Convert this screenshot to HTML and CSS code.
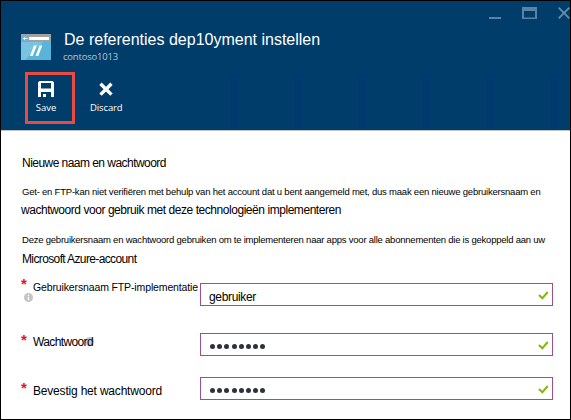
FILE: index.html
```html
<!DOCTYPE html>
<html lang="nl">
<head>
<meta charset="utf-8">
<title>De referenties instellen</title>
<link rel="stylesheet" href="styles.css">
</head>
<body>
<div class="blade">
  <header class="header">
    <div class="window-buttons">
      <svg width="12" height="12" viewBox="0 0 12 12"><path d="M0 10h12v2H0z" fill="#5a82a3"/></svg>
      <svg width="15" height="12" viewBox="0 0 15 12"><path fill-rule="evenodd" d="M0 0h15v12H0zM2 4v6.500h11V4z" fill="#5a82a3"/></svg>
      <svg width="12" height="12" viewBox="0 0 12 12"><path d="M.7.7l10.600 10.600M11.300.7L.7 11.300" stroke="#6a8eac" stroke-width="1.700"/></svg>
    </div>
    <div class="heading">
      <svg class="site-icon" width="30" height="26" viewBox="0 0 30 26">
        <path d="M0 0h30v26H0z" fill="#59b4d9"/>
        <path d="M0 8h22L4 26H0z" fill="#7ac3e1"/>
        <path d="M0 0h30v8H0z" fill="#a0a1a2"/>
        <path d="M8 3h20v3H8z" fill="#fff"/>
        <circle cx="4.300" cy="4.500" r="3.100" fill="#59b4d9"/>
        <path d="M6.700 4.500H2.400M4.300 2.700L2.400 4.500l1.900 1.800" fill="none" stroke="#fff" stroke-width=".9"/>
        <path d="M13 11.500h2.800L11.800 22H9zM18.500 11.500h2.800L17.300 22h-2.800z" fill="#fff"/>
      </svg>
      <div>
        <h1 class="title">De referenties dep10yment instellen</h1>
        <p class="subtitle">contoso1013</p>
      </div>
    </div>
    <nav class="commands">
      <a class="command command-save">
        <svg width="16" height="16" viewBox="0 0 16 16"><path fill-rule="evenodd" d="M1.500 0h13L16 1.500V16H13v-5H3v5H0V1.500zM3 2v5.500h10V2z" fill="#fff"/><path d="M5 13h3v3H5z" fill="#fff"/></svg>
        <span>Save</span>
      </a>
      <a class="command command-discard">
        <svg width="16" height="16" viewBox="0 0 16 16"><path d="M2.500 2.800l11 10.800M13.500 2.800L2.500 13.600" stroke="#fff" stroke-width="3.400"/></svg>
        <span>Discard</span>
      </a>
    </nav>
  </header>
  <main class="content">
    <h2 class="text section">Nieuwe naam en wachtwoord</h2>
    <div class="para">
      <p class="small small-a">Get- en FTP-kan niet verifiëren met behulp van het account dat u bent aangemeld met, dus maak een nieuwe gebruikersnaam en</p>
      <p class="text tech">wachtwoord voor gebruik met deze technologieën implementeren</p>
    </div>
    <div class="para para-b">
      <p class="small small-b">Deze gebruikersnaam en wachtwoord gebruiken om te implementeren naar apps voor alle abonnementen die is gekoppeld aan uw</p>
      <p class="text account">Microsoft Azure-account</p>
    </div>
    <form class="form">
      <div class="field">
        <span class="star star-user">*</span>
        <label class="label label-user">Gebruikersnaam FTP-implementatie</label>
        <svg class="info info-user" width="9" height="9" viewBox="0 0 9 9"><circle cx="4.500" cy="4.500" r="4.500" fill="#c4c4c4"/><path d="M3.800 1.700h1.400v1.200H3.800zM3.800 3.700h1.400v3.600H3.800z" fill="#fff"/></svg>
        <div class="input"><span class="value">gebruiker</span><svg class="check" width="11" height="9" viewBox="0 0 11 9"><path d="M1 4l3.300 3.300L9.700 1" fill="none" stroke="#7fba00" stroke-width="2"/></svg></div>
      </div>
      <div class="field">
        <span class="star star-pass">*</span>
        <label class="label label-pass">Wachtwoord</label>
        <svg class="info info-pass" width="9" height="9" viewBox="0 0 9 9"><circle cx="4.500" cy="4.500" r="4.500" fill="#c8ccd0"/></svg>
        <div class="input"><span class="dots"><i></i><i></i><i></i><i></i><i></i><i></i><i></i><i></i></span><svg class="check" width="11" height="9" viewBox="0 0 11 9"><path d="M1 4l3.300 3.300L9.700 1" fill="none" stroke="#7fba00" stroke-width="2"/></svg></div>
      </div>
      <div class="field">
        <span class="star star-confirm">*</span>
        <label class="label label-confirm">Bevestig het wachtwoord</label>
        <div class="input"><span class="dots"><i></i><i></i><i></i><i></i><i></i><i></i><i></i><i></i></span><svg class="check" width="11" height="9" viewBox="0 0 11 9"><path d="M1 4l3.300 3.300L9.700 1" fill="none" stroke="#7fba00" stroke-width="2"/></svg></div>
      </div>
    </form>
  </main>
</div>
</body>
</html>
```

FILE: styles.css
```css
* { box-sizing: border-box; }
body, h1, h2, p { margin: 0; font-weight: normal; }
body {
  font-family: "Liberation Sans", Arial, sans-serif;
  color: #000;
  overflow: hidden;
}
svg { display: block; flex: none; }
.blade {
  width: 571px;
  height: 420px;
  border: 1px solid #000;
  background: #fff;
  overflow: hidden;
}
.header {
  height: 130px;
  border-bottom: 1px solid #bfc3c6;
  background: #003d6b;
}
.window-buttons {
  display: flex;
  justify-content: flex-end;
  gap: 21px;
  height: 28px;
  padding-top: 6px;
}
.heading {
  display: flex;
  gap: 12px;
  height: 42px;
  padding-left: 20px;
}
.site-icon { margin-top: 5px; }
.title {
  font-size: 16px;
  line-height: 20px;
  padding-left: 1px;
  margin-top: 1px;
  color: #fff;
}
.subtitle {
  font: 9.5px/12px "Open Sans", sans-serif;
  letter-spacing: -0.2px;
  margin-top: 1px;
  color: #b5c6d4;
}
.commands {
  display: flex;
  height: 59px;
  background: repeating-linear-gradient(90deg, #003870 0 6px, transparent 6px 64px) 230px 4px no-repeat;
}
.command {
  display: flex;
  flex-direction: column;
  align-items: center;
  font: 9.5px/12px "Open Sans", sans-serif;
  color: #fff;
}
.command svg { margin-bottom: 5px; }
.command-save {
  width: 50px;
  height: 52px;
  margin: 1px 0 0 24px;
  padding: 6px 8px 0 0;
  border: 3px solid #e84c40;
}
.command-discard {
  margin-left: 15px;
  padding-top: 10px;
  letter-spacing: -0.12px;
}
.content { padding: 24px 18px 0 21px; }
.text {
  font-size: 12px;
  line-height: 16px;
  white-space: nowrap;
}
.section { letter-spacing: -0.54px; }
.small {
  font-size: 9.5px;
  line-height: 14px;
  white-space: nowrap;
}
.small-a { letter-spacing: -0.213px; }
.small-b { letter-spacing: -0.223px; }
.tech { letter-spacing: -0.448px; margin-left: -1px; }
.account { letter-spacing: -0.625px; }
.para { margin-top: 14px; }
.para .text { margin-top: 3px; }
.para-b { margin-top: 15px; }
.para-b .text { margin-top: 4px; }
.form { margin-top: 16px; }
.field {
  position: relative;
  display: grid;
  grid-template-columns: 11px 167px 353px;
  height: 23px;
  margin-bottom: 27px;
}
.field + .field { margin-bottom: 21px; }
.star {
  font: bold 15px/20px "Liberation Sans", sans-serif;
  margin-left: -1px;
  color: #e81123;
}
.star-user { margin-top: -9px; }
.star-pass { margin-top: -3px; }
.star-confirm { margin-top: 1px; }
.label {
  font-size: 12px;
  line-height: 16px;
  white-space: nowrap;
}
.label-user { font-size: 10.5px; letter-spacing: -0.132px; margin-top: -4px; }
.label-pass { letter-spacing: -0.625px; margin-top: 1px; z-index: 1; }
.label-confirm { letter-spacing: -0.192px; margin-top: 6px; }
.info { position: absolute; }
.info-user { left: 2px; top: 10px; }
.info-pass { left: 63px; top: 4px; }
.input {
  grid-column: 3;
  display: flex;
  align-items: center;
  justify-content: space-between;
  height: 23px;
  padding: 0 3px 0 8px;
  border: 1px solid #9b4f96;
}
.value {
  font-size: 12px;
  line-height: 16px;
  letter-spacing: -0.336px;
  padding-top: 4px;
}
.dots { display: flex; gap: 2.2px; padding: 4px 0 0 1px; }
.dots i {
  width: 5px;
  height: 5px;
  border-radius: 50%;
  background: #2c333b;
}
.check { margin-top: 2px; }
```
